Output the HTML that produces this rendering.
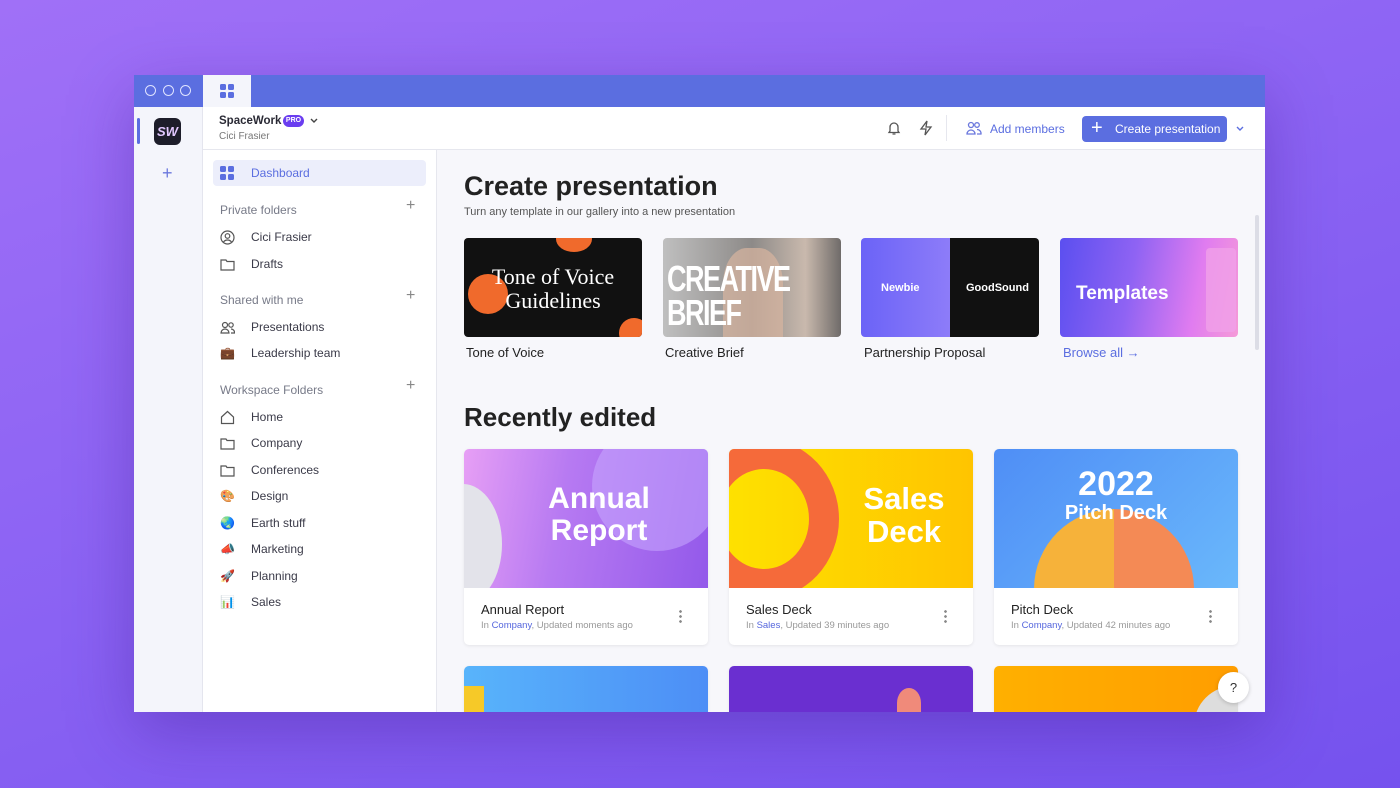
<!DOCTYPE html>
<html style="overflow:hidden"><head><meta charset="utf-8"><style>
*{margin:0;padding:0;box-sizing:border-box}
html,body{width:1400px;height:788px;overflow:hidden}
body{font-family:"Liberation Sans",sans-serif;background:linear-gradient(160deg,#a070f7 0%,#8a62f3 50%,#7552ee 100%);position:relative}
.a{position:absolute}
.win{left:134px;top:75px;width:1131px;height:637px;background:#f7f7fb;overflow:hidden;box-shadow:0 20px 60px rgba(60,20,140,.35)}
.top{left:0;top:0;width:1131px;height:32px;background:#5b6ee0}
.dot{width:11px;height:11px;border:1.5px solid #dfe3ff;border-radius:50%;top:10px}
.rail{left:0;top:32px;width:69px;height:605px;background:#f4f5fb;border-right:1px solid #e4e5ee}
.hdr{left:69px;top:32px;width:1062px;height:43px;background:#fff;border-bottom:1px solid #e6e7ee}
.side{left:69px;top:75px;width:234px;height:562px;background:#fff;border-right:1px solid #e6e7ee;overflow:hidden}
.it{position:absolute;left:48px;font-size:12px;color:#3a3a48}
.ic{position:absolute;left:17px;width:15px;height:15px;overflow:hidden}
.sec{position:absolute;left:17px;font-size:12px;color:#777a88}
.pl{position:absolute;left:203px;font-size:16px;color:#888;font-weight:300}
.card{position:absolute;width:178px;height:99px;border-radius:4px;overflow:hidden}
.lbl{position:absolute;font-size:13px;color:#222}
.rc{position:absolute;width:244px;height:196px;background:#fff;border-radius:5px;overflow:hidden;box-shadow:0 1px 3px rgba(0,0,0,.08)}
.rc .im{position:absolute;left:0;top:0;width:244px;height:139px;overflow:hidden}
.rc .t{position:absolute;left:17px;top:153px;font-size:13px;color:#222}
.rc .s{position:absolute;left:17px;top:171px;font-size:9.5px;color:#999}
.rc .s b{font-weight:normal;color:#5566dd}
.rc .m{position:absolute;right:26px;top:160px;width:3px;height:14px;background:radial-gradient(circle,#888 1.2px,transparent 1.5px) 0 0/3px 5px}
.big{position:absolute;color:#fff;font-weight:bold;text-align:center;line-height:1.05}
</style></head><body>
<div class="a win">
 <div class="a top"></div>
 <div class="a dot" style="left:11px"></div><div class="a dot" style="left:29px"></div><div class="a dot" style="left:46px"></div>
 <div class="a" style="left:69px;top:0;width:48px;height:32px;background:#f4f5fb"></div>
 <svg class="a" style="left:86px;top:9px" width="15" height="15"><rect x="0" y="0" width="6" height="6" rx="1.5" fill="#5b6ee0"/><rect x="8" y="0" width="6" height="6" rx="1.5" fill="#5b6ee0"/><rect x="0" y="8" width="6" height="6" rx="1.5" fill="#5b6ee0"/><rect x="8" y="8" width="6" height="6" rx="1.5" fill="#5b6ee0"/></svg>
 <div class="a rail"></div>
 <div class="a" style="left:3px;top:43px;width:3px;height:26px;background:#5b6ee0;border-radius:2px"></div>
 <div class="a" style="left:20px;top:43px;width:27px;height:27px;border-radius:6px;background:#1d1d2a;font-weight:bold;font-size:13px;text-align:center;line-height:27px;font-style:italic;color:#e2c8ff">SW</div>
 <div class="a" style="left:28px;top:88px;font-size:18px;color:#6b78dd;font-weight:300">+</div>
 <div class="a hdr"></div>
 <div class="a" style="left:85px;top:40px;font-size:11.5px;font-weight:bold;color:#2a2a35">SpaceWork</div>
 <div class="a" style="left:149px;top:40px;width:21px;height:12px;border-radius:6px;background:#6a3df0;color:#fff;font-size:7px;font-weight:bold;text-align:center;line-height:12px">PRO</div>
 <svg class="a" style="left:176px;top:43px" width="8" height="6"><path d="M1 1l3 3 3-3" stroke="#444" stroke-width="1.4" fill="none"/></svg>
 <div class="a" style="left:85px;top:56px;font-size:10px;color:#777">Cici Frasier</div>
 <svg class="a" style="left:752px;top:45px" width="16" height="16" fill="none" stroke="#555" stroke-width="1.3"><path d="M4 11V7a4 4 0 0 1 8 0v4l1 1.5H3z M6.5 14h3"/></svg>
 <svg class="a" style="left:784px;top:45px" width="16" height="16" fill="none" stroke="#555" stroke-width="1.3"><path d="M9 1L3 9h5l-1 6 6-8H8z"/></svg>
 <div class="a" style="left:812px;top:40px;width:1px;height:26px;background:#e6e7ee"></div>
 <svg class="a" style="left:832px;top:46px" width="16" height="14" fill="none" stroke="#6b78dd" stroke-width="1.3"><circle cx="5" cy="4" r="2.5"/><path d="M1 13a4 4 0 0 1 8 0z"/><circle cx="11" cy="4" r="2.3"/><path d="M11 8.5a4 4 0 0 1 4 4.5h-4"/></svg>
 <div class="a" style="left:856px;top:47px;font-size:12px;color:#5b6ee0">Add members</div>
 <div class="a" style="left:948px;top:41px;width:145px;height:26px;background:#5b6ee0;border-radius:4px;color:#fff;font-size:12px;line-height:26px;padding-left:33px">Create presentation</div>
 <div class="a" style="left:957px;top:42px;color:#fff;font-size:20px;font-weight:300">+</div>
 <svg class="a" style="left:1102px;top:51px" width="8" height="6"><path d="M1 1l3 3 3-3" stroke="#5b6ee0" stroke-width="1.4" fill="none"/></svg>
 <div class="a side">
  <div class="a" style="left:10px;top:10px;width:213px;height:26px;background:#eceefb;border-radius:4px"></div>
  <svg class="ic" style="top:16px" width="15" height="15"><rect x="0" y="0" width="6" height="6" rx="1.5" fill="#5b6ee0"/><rect x="8" y="0" width="6" height="6" rx="1.5" fill="#5b6ee0"/><rect x="0" y="8" width="6" height="6" rx="1.5" fill="#5b6ee0"/><rect x="8" y="8" width="6" height="6" rx="1.5" fill="#5b6ee0"/></svg>
  <div class="it" style="top:16px;color:#5b6ee0">Dashboard</div>
  <div class="sec" style="top:53px">Private folders</div><div class="pl" style="top:47px">+</div>
  <svg class="ic" style="top:80px" fill="none" stroke="#555" stroke-width="1.2"><circle cx="7.5" cy="7.5" r="6.5"/><circle cx="7.5" cy="6" r="2.3"/><path d="M3.5 12a5 5 0 0 1 8 0"/></svg>
  <div class="it" style="top:80px">Cici Frasier</div>
  <svg class="ic" style="top:107px" fill="none" stroke="#555" stroke-width="1.2"><path d="M1 3h5l1 1.5h7V13H1z"/></svg>
  <div class="it" style="top:107px">Drafts</div>
  <div class="sec" style="top:143px">Shared with me</div><div class="pl" style="top:137px">+</div>
  <svg class="ic" style="top:170px" fill="none" stroke="#555" stroke-width="1.2"><circle cx="5" cy="5" r="2.5"/><path d="M1 13a4 4 0 0 1 8 0z"/><circle cx="11" cy="5" r="2.2"/><path d="M11 9a3.5 3.5 0 0 1 3.5 4H11"/></svg>
  <div class="it" style="top:170px">Presentations</div>
  <div class="ic" style="top:196px;font-size:12px;line-height:15px">💼</div>
  <div class="it" style="top:196px">Leadership team</div>
  <div class="sec" style="top:233px">Workspace Folders</div><div class="pl" style="top:227px">+</div>
  <svg class="ic" style="top:260px" fill="none" stroke="#555" stroke-width="1.2"><path d="M1.5 7L7.5 1.5 13.5 7v6.5h-12z"/></svg>
  <div class="it" style="top:260px">Home</div>
  <svg class="ic" style="top:286px" fill="none" stroke="#555" stroke-width="1.2"><path d="M1 3h5l1 1.5h7V13H1z"/></svg>
  <div class="it" style="top:286px">Company</div>
  <svg class="ic" style="top:313px" fill="none" stroke="#555" stroke-width="1.2"><path d="M1 3h5l1 1.5h7V13H1z"/></svg>
  <div class="it" style="top:313px">Conferences</div>
  <div class="ic" style="top:339px;font-size:12px;line-height:15px">🎨</div><div class="it" style="top:339px">Design</div>
  <div class="ic" style="top:366px;font-size:12px;line-height:15px">🌏</div><div class="it" style="top:366px">Earth stuff</div>
  <div class="ic" style="top:392px;font-size:12px;line-height:15px">📣</div><div class="it" style="top:392px">Marketing</div>
  <div class="ic" style="top:419px;font-size:12px;line-height:15px">🚀</div><div class="it" style="top:419px">Planning</div>
  <div class="ic" style="top:445px;font-size:12px;line-height:15px">📊</div><div class="it" style="top:445px">Sales</div>
  <div class="a" style="left:0;top:571px;width:234px;height:1px;background:#e6e7ee"></div>
  <svg class="ic" style="top:583px" fill="none" stroke="#555" stroke-width="1.2"><rect x="2.5" y="1" width="10" height="13" rx="1"/><path d="M5 9h5"/></svg>
  <div class="it" style="top:583px">Team templates</div>
  <svg class="ic" style="top:615px" fill="none" stroke="#555" stroke-width="1.2"><rect x="1.5" y="5" width="12" height="9"/><path d="M1 5h13M7.5 5v9M7.5 5C5 1 3 3 5 5M7.5 5c2.5-4 4.5-2 2.5 0"/></svg>
  <div class="it" style="top:615px">What’s New</div>
 </div>
 <div class="a" style="left:1121px;top:140px;width:4px;height:135px;background:#dcdde6;border-radius:2px"></div>
 <div class="a" style="left:330px;top:96px;font-size:27px;font-weight:bold;color:#222">Create presentation</div>
 <div class="a" style="left:330px;top:131px;font-size:11px;color:#555">Turn any template in our gallery into a new presentation</div>
 <div class="card" style="left:330px;top:163px;background:#111">
  <div class="a" style="left:92px;top:-12px;width:36px;height:26px;border-radius:50%;background:#f06a2c"></div>
  <div class="a" style="left:4px;top:36px;width:40px;height:40px;border-radius:50%;background:#f06a2c"></div>
  <div class="a" style="left:155px;top:80px;width:30px;height:30px;border-radius:50%;background:#f06a2c"></div>
  <div class="big" style="left:0;top:27px;width:178px;font-family:'Liberation Serif',serif;font-weight:normal;font-size:22px;line-height:1.1">Tone of Voice<br>Guidelines</div>
 </div>
 <div class="lbl" style="left:332px;top:270px">Tone of Voice</div>
 <div class="card" style="left:529px;top:163px;background:linear-gradient(90deg,#bfbfbf,#8d8a88 50%,#c9b9ad 80%,#6f6b69)">
  <div class="a" style="left:60px;top:10px;width:60px;height:90px;border-radius:40% 40% 0 0;background:#d9b5a0;opacity:.7"></div>
  <div class="big" style="left:4px;top:24px;font-size:36px;letter-spacing:-2px;text-align:left;transform:scaleX(.75);transform-origin:left;line-height:.95">CREATIVE<br>BRIEF</div>
 </div>
 <div class="lbl" style="left:531px;top:270px">Creative Brief</div>
 <div class="card" style="left:727px;top:163px;background:linear-gradient(90deg,#6b63f7,#8d7cf9 50%,#111 50%)">
  <div class="a" style="left:20px;top:44px;color:#fff;font-size:11px;font-weight:bold">Newbie</div>
  <div class="a" style="left:105px;top:44px;color:#fff;font-size:11px;font-weight:bold">GoodSound</div>
 </div>
 <div class="lbl" style="left:730px;top:270px">Partnership Proposal</div>
 <div class="card" style="left:926px;top:163px;background:linear-gradient(100deg,#5b4ff0,#8f63f3 40%,#e07cf0 75%,#f59ad8)">
  <div class="a" style="left:146px;top:10px;width:30px;height:84px;background:#f0a0e8;border-radius:4px;opacity:.8"></div>
  <div class="a" style="left:16px;top:45px;color:#fff;font-size:19px;font-weight:bold">Templates</div>
 </div>
 <div class="lbl" style="left:929px;top:270px;color:#5b6ee0">Browse all →</div>
 <div class="a" style="left:330px;top:327px;font-size:26px;font-weight:bold;color:#222">Recently edited</div>
 <div class="rc" style="left:330px;top:374px">
  <div class="im" style="background:linear-gradient(100deg,#e79ff5,#b77af2 40%,#9359ea)">
   <div class="a" style="left:128px;top:-28px;width:130px;height:130px;border-radius:50%;background:rgba(200,170,255,.55)"></div>
   <div class="a" style="left:-40px;top:35px;width:78px;height:120px;border-radius:50%;background:#e3e3ea"></div>
   <div class="big" style="left:50px;top:34px;width:170px;font-size:30px">Annual<br>Report</div>
  </div>
  <div class="t">Annual Report</div><div class="s">In <b>Company</b>, Updated moments ago</div><div class="m"></div>
 </div>
 <div class="rc" style="left:595px;top:374px">
  <div class="im" style="background:linear-gradient(90deg,#fee100,#ffc400)">
   <div class="a" style="left:-40px;top:-10px;width:150px;height:160px;border-radius:50%;border:30px solid #f56a3a"></div>
   <div class="big" style="left:110px;top:34px;width:130px;font-size:31px">Sales<br>Deck</div>
  </div>
  <div class="t">Sales Deck</div><div class="s">In <b>Sales</b>, Updated 39 minutes ago</div><div class="m"></div>
 </div>
 <div class="rc" style="left:860px;top:374px">
  <div class="im" style="background:linear-gradient(135deg,#4f8ef6,#6ab8fb)">
   <div class="a" style="left:40px;top:60px;width:160px;height:160px;border-radius:50%;background:conic-gradient(#f48a55 0 40%,#f5f5fb 40% 55%,#8a6ff0 55% 65%,#f6b23a 65%)"></div>
   <div class="big" style="left:0;top:18px;width:244px;font-size:34px">2022</div>
   <div class="big" style="left:0;top:54px;width:244px;font-size:20px">Pitch Deck</div>
  </div>
  <div class="t">Pitch Deck</div><div class="s">In <b>Company</b>, Updated 42 minutes ago</div><div class="m"></div>
 </div>
 <div class="rc" style="left:330px;top:591px;background:linear-gradient(90deg,#58b4fb,#4d8ef6)"><div class="a" style="left:0;top:20px;width:20px;height:30px;background:#f6c928"></div></div>
 <div class="rc" style="left:595px;top:591px;background:#6a2fd0"><div class="a" style="left:168px;top:22px;width:24px;height:30px;border-radius:50% 50% 0 0;background:#f08a7a"></div></div>
 <div class="rc" style="left:860px;top:591px;background:linear-gradient(90deg,#ffb000,#ff9d00)"><div class="a" style="left:200px;top:20px;width:80px;height:80px;border-radius:50%;background:#ddd"></div></div>
 <div class="a" style="left:1084px;top:597px;width:31px;height:31px;border-radius:50%;background:#fff;box-shadow:0 1px 4px rgba(0,0,0,.2);text-align:center;line-height:31px;font-size:13px;color:#333">?</div>
</div>
</body></html>
